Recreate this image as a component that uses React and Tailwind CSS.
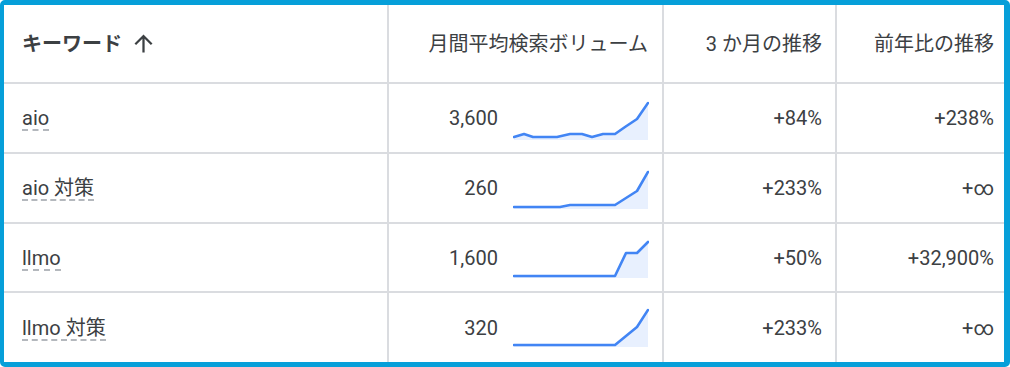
const rows = [
  {
    kw: 'aio',
    vol: '3,600',
    m3: '+84%',
    yoy: '+238%',
    h: 'h-[70px]',
    pts: [[1, 38], [11, 35], [20, 38], [44, 38], [57, 35], [69, 35], [79, 38], [90, 35], [102, 35], [112, 28], [124, 20], [135, 4]],
    base: 41,
  },
  {
    kw: 'aio 対策',
    vol: '260',
    m3: '+233%',
    yoy: '+∞',
    h: 'h-[70px]',
    pts: [[1, 38], [47, 38], [57, 36], [102, 36], [124, 22], [135, 3]],
    base: 40,
  },
  {
    kw: 'llmo',
    vol: '1,600',
    m3: '+50%',
    yoy: '+32,900%',
    h: 'h-[69px]',
    pts: [[1, 37], [102, 37], [113, 14], [124, 14], [135, 3]],
    base: 39,
  },
  {
    kw: 'llmo 対策',
    vol: '320',
    m3: '+233%',
    yoy: '+∞',
    h: 'flex-1',
    pts: [[1, 37], [102, 37], [124, 19], [135, 2]],
    base: 39,
  },
]

function Spark({ pts, base }) {
  const line = pts.map(p => p.join(',')).join(' ')
  const area = `${pts[0][0]},${base} ${line} ${pts[pts.length - 1][0]},${base}`
  return (
    <svg width="136" height="42" viewBox="0 0 136 42" className="shrink-0 self-start mt-[15px]">
      <polygon points={area} fill="#e8f0fe" />
      <polyline points={line} fill="none" stroke="#4285f4" strokeWidth="2.6" strokeLinejoin="round" strokeLinecap="round" />
    </svg>
  )
}

function ArrowUp() {
  return (
    <svg width="27" height="27" viewBox="0 0 24 24" className="ml-[8px]">
      <path d="M4 12l1.41 1.41L11 7.83V20h2V7.83l5.58 5.59L20 12l-8-8-8 8z" fill="#3c4043" />
    </svg>
  )
}

export default function App() {
  const cell = 'border-r-2 border-[#dadce0] flex items-center'
  return (
    <div
      className="w-[1010px] h-[367px] bg-white border-[#069fd9] border-t-[5px] border-l-4 border-r-[6px] border-b-[5px] rounded-[5px] flex flex-col text-[20px] text-[#3c4043] overflow-hidden"
      style={{ fontFamily: 'Roboto, "Noto Sans CJK JP", sans-serif' }}
    >
      {/* header */}
      <div className="grid grid-cols-[385px_275px_173px_1fr] h-[79px] border-b-2 border-[#dadce0] shrink-0">
        <div className={`${cell} pl-[18px] font-bold`}>
          <span>キーワード</span>
          <ArrowUp />
        </div>
        <div className={`${cell} justify-end pr-[14px]`}>月間平均検索ボリューム</div>
        <div className={`${cell} justify-end pr-[13px]`}>3 か月の推移</div>
        <div className="flex items-center justify-end pr-[10px]">前年比の推移</div>
      </div>

      {rows.map((r, i) => (
        <div
          key={r.kw}
          className={`grid grid-cols-[385px_275px_173px_1fr] ${r.h} ${i < rows.length - 1 ? 'border-b-2 border-[#dadce0] shrink-0' : ''}`}
        >
          <div className={`${cell} pl-[18px]`}>
            <span className="leading-[21px] border-b-2 border-dashed border-[#b4b8bd] mt-[3px]">
              {r.kw}
            </span>
          </div>
          <div className={`${cell} justify-end pr-[13px] gap-[15px]`}>
            <span>{r.vol}</span>
            <Spark pts={r.pts} base={r.base} />
          </div>
          <div className={`${cell} justify-end pr-[13px]`}>{r.m3}</div>
          <div className="flex items-center justify-end pr-[10px]">{r.yoy}</div>
        </div>
      ))}
    </div>
  )
}
